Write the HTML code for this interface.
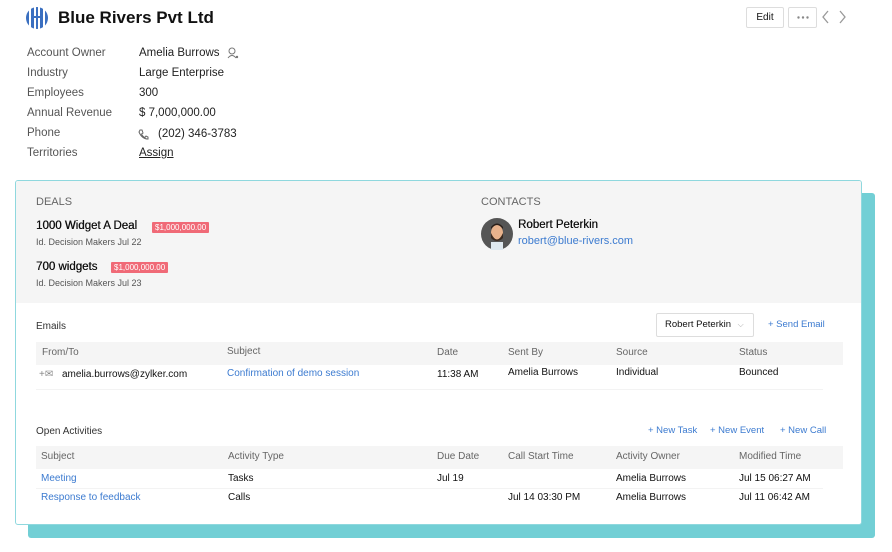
<!DOCTYPE html>
<html><head><meta charset="utf-8"><style>
*{margin:0;padding:0;box-sizing:border-box}
body{width:892px;height:552px;background:#fff;font-family:"Liberation Sans",sans-serif;color:#111;position:relative;overflow:hidden;font-size:11px}
.a{position:absolute;white-space:nowrap}
.lbl{color:#555;font-size:11.5px}
.val{color:#222;font-size:11.5px}
.card{position:absolute;left:15px;top:180px;width:847px;height:345px;border:1px solid #8fd8de;border-radius:3px;background:#fff;box-shadow:13px 13px 0 #72cfd5;overflow:hidden}
.gray{position:absolute;left:0;top:0;width:100%;height:122px;background:#f5f5f5}
.th{background:#f5f5f5}
.hd{color:#666;font-size:10px}
.cell{font-size:10px;color:#111}
.lnk{color:#3c7bd0;font-size:10px}
.badge{background:#f06a77;color:#fff;font-size:8px;padding:1px 3px;border-radius:1px}
.btn{position:absolute;border:1px solid #ddd;border-radius:2px;background:#fff}
.dn{font-size:11.5px;color:#111;text-shadow:0.3px 0 0 #111}
</style></head><body>
<svg class="a" style="left:25px;top:6px" width="24" height="24" viewBox="0 0 24 24">
<defs><clipPath id="c"><circle cx="12" cy="12" r="11"/></clipPath></defs>
<g clip-path="url(#c)" fill="#3a6fc0">
<rect x="1" y="2" width="3" height="20"/><rect x="6" y="0" width="3" height="24"/><rect x="11" y="0" width="2" height="24"/><rect x="15" y="0" width="3" height="24"/><rect x="20" y="2" width="3" height="20"/>
<rect x="6" y="10" width="12" height="2"/></g></svg>
<div class="a" style="left:58px;top:8px;font-size:17px;font-weight:bold;color:#111">Blue Rivers Pvt Ltd</div>
<div class="btn" style="left:746px;top:7px;width:38px;height:21px;font-size:10px;text-align:center;line-height:19px">Edit</div>
<div class="btn" style="left:788px;top:7px;width:29px;height:21px"><svg style="position:absolute;left:8px;top:8px" width="12" height="3"><circle cx="1.5" cy="1.5" r="1.2" fill="#888"/><circle cx="6" cy="1.5" r="1.2" fill="#888"/><circle cx="10.5" cy="1.5" r="1.2" fill="#888"/></svg></div>
<svg class="a" style="left:820px;top:10px" width="30" height="14"><path d="M8 1 L3 7 L8 13 M20 1 L25 7 L20 13" stroke="#999" fill="none" stroke-width="1.3"/></svg>

<div class="a lbl" style="left:27px;top:47px">Account Owner</div>
<div class="a val" style="left:139px;top:47px">Amelia Burrows</div>
<svg class="a" style="left:227px;top:47px" width="12" height="12"><circle cx="5" cy="4" r="3" fill="none" stroke="#777"/><path d="M1 11 Q5 6 9 11" fill="none" stroke="#777"/><circle cx="10" cy="10" r="1.2" fill="#777"/></svg>
<div class="a lbl" style="left:27px;top:67px">Industry</div><div class="a val" style="left:139px;top:67px">Large Enterprise</div>
<div class="a lbl" style="left:27px;top:87px">Employees</div><div class="a val" style="left:139px;top:87px">300</div>
<div class="a lbl" style="left:27px;top:107px">Annual Revenue</div><div class="a val" style="left:139px;top:107px">$ 7,000,000.00</div>
<div class="a lbl" style="left:27px;top:127px">Phone</div>
<svg class="a" style="left:138px;top:129px" width="11" height="11"><path d="M2 1 L4 1 L5 4 L3.5 5 Q5 8 7 8.5 L8 7 L10 8 L10 10 Q4 10 1 3 Z" fill="none" stroke="#666"/></svg>
<div class="a val" style="left:158px;top:128px">(202) 346-3783</div>
<div class="a lbl" style="left:27px;top:147px">Territories</div><div class="a val" style="left:139px;top:147px;text-decoration:underline">Assign</div>

<div class="card">
<div class="gray"></div>
<div class="a" style="left:20px;top:15px;font-size:11px;color:#666">DEALS</div>
<div class="a dn" style="left:20px;top:39px">1000 Widget A Deal</div>
<div class="a badge" style="left:136px;top:41px">$1,000,000.00</div>
<div class="a" style="left:20px;top:56px;font-size:9px;color:#555">Id. Decision Makers Jul 22</div>
<div class="a dn" style="left:20px;top:80px">700 widgets</div>
<div class="a badge" style="left:95px;top:81px">$1,000,000.00</div>
<div class="a" style="left:20px;top:97px;font-size:9px;color:#555">Id. Decision Makers Jul 23</div>
<div class="a" style="left:465px;top:15px;font-size:11px;color:#666">CONTACTS</div>
<svg class="a" style="left:465px;top:37px" width="32" height="32"><circle cx="16" cy="16" r="16" fill="#555"/><rect x="10" y="24" width="12" height="8" fill="#dfe8ee"/><ellipse cx="16" cy="15" rx="6" ry="8" fill="#e8b28c"/><path d="M10 15 Q16 28 22 15 L22 20 Q16 26 10 20Z" fill="#3a2a20"/><path d="M10 11 Q16 3 22 11 L22 9 Q16 2 10 9Z" fill="#2a1e18"/></svg>
<div class="a dn" style="left:502px;top:38px">Robert Peterkin</div>
<div class="a" style="left:502px;top:54px;font-size:11px;color:#3c7bd0">robert@blue-rivers.com</div>

<div class="a" style="left:20px;top:140px;font-size:10px;color:#333">Emails</div>
<div class="btn" style="left:640px;top:132px;width:98px;height:24px;font-size:9.5px;line-height:22px;padding-left:8px">Robert Peterkin <span style="color:#aaa;font-size:8px;margin-left:4px">⌵</span></div>
<div class="a" style="left:752px;top:138px;font-size:9.5px;color:#3c7bd0">+ Send Email</div>
<div class="a th" style="left:20px;top:161px;width:807px;height:23px"></div>
<div class="a hd" style="left:26px;top:166px">From/To</div>
<div class="a hd" style="left:211px;top:165px">Subject</div>
<div class="a hd" style="left:421px;top:166px">Date</div>
<div class="a hd" style="left:492px;top:166px">Sent By</div>
<div class="a hd" style="left:600px;top:166px">Source</div>
<div class="a hd" style="left:723px;top:166px">Status</div>
<div class="a" style="left:23px;top:188px;font-size:10px;color:#888">+✉</div>
<div class="a cell" style="left:46px;top:188px">amelia.burrows@zylker.com</div>
<div class="a lnk" style="left:211px;top:187px">Confirmation of demo session</div>
<div class="a cell" style="left:421px;top:188px">11:38 AM</div>
<div class="a cell" style="left:492px;top:186px">Amelia Burrows</div>
<div class="a cell" style="left:600px;top:186px">Individual</div>
<div class="a cell" style="left:723px;top:186px">Bounced</div>
<div class="a" style="left:20px;top:208px;width:787px;height:1px;background:#f3f3f3"></div>

<div class="a" style="left:20px;top:245px;font-size:10px;color:#333">Open Activities</div>
<div class="a" style="left:632px;top:244px;font-size:9.5px;color:#3c7bd0">+ New Task</div>
<div class="a" style="left:694px;top:244px;font-size:9.5px;color:#3c7bd0">+ New Event</div>
<div class="a" style="left:764px;top:244px;font-size:9.5px;color:#3c7bd0">+ New Call</div>
<div class="a th" style="left:20px;top:265px;width:807px;height:23px"></div>
<div class="a hd" style="left:25px;top:270px">Subject</div>
<div class="a hd" style="left:212px;top:270px">Activity Type</div>
<div class="a hd" style="left:421px;top:270px">Due Date</div>
<div class="a hd" style="left:492px;top:270px">Call Start Time</div>
<div class="a hd" style="left:600px;top:270px">Activity Owner</div>
<div class="a hd" style="left:723px;top:270px">Modified Time</div>
<div class="a lnk" style="left:25px;top:292px">Meeting</div>
<div class="a cell" style="left:212px;top:292px">Tasks</div>
<div class="a cell" style="left:421px;top:292px">Jul 19</div>
<div class="a cell" style="left:600px;top:292px">Amelia Burrows</div>
<div class="a cell" style="left:723px;top:292px">Jul 15 06:27 AM</div>
<div class="a" style="left:20px;top:307px;width:787px;height:1px;background:#f3f3f3"></div>
<div class="a lnk" style="left:25px;top:311px">Response to feedback</div>
<div class="a cell" style="left:212px;top:311px">Calls</div>
<div class="a cell" style="left:492px;top:311px">Jul 14 03:30 PM</div>
<div class="a cell" style="left:600px;top:311px">Amelia Burrows</div>
<div class="a cell" style="left:723px;top:311px">Jul 11 06:42 AM</div>
</div>
</body></html>
